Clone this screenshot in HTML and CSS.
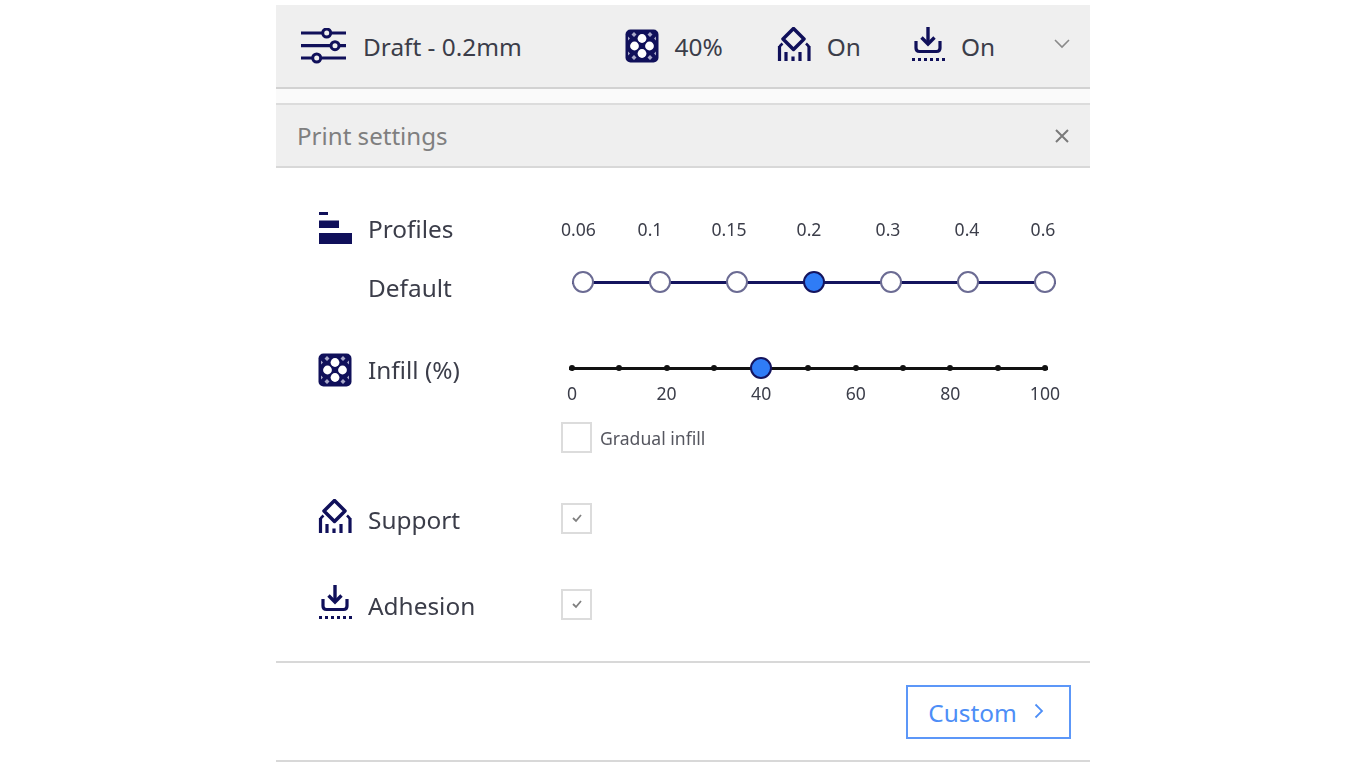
FILE: index.html

```html
<!DOCTYPE html>
<html lang="en">
<head>
<meta charset="utf-8"/>
<title>Print settings</title>
<link rel="stylesheet" href="styles.css">
</head>
<body>
<svg class="defs" width="0" height="0">
  <symbol id="i-infill" viewBox="0 0 34 34">
    <rect x="0.5" y="0.5" width="33" height="33" rx="5" fill="#10105a"/>
    <circle cx="17" cy="9.500" r="4.400" fill="#fff"/>
    <circle cx="9.500" cy="17" r="4.400" fill="#fff"/>
    <circle cx="24.500" cy="17" r="4.400" fill="#fff"/>
    <circle cx="17" cy="24.500" r="4.400" fill="#fff"/>
    <path d="M9 3l2.500 2.500L9 8 6.500 5.500zM25 3l2.500 2.500L25 8l-2.500-2.500zM9 26l2.500 2.500L9 31l-2.500-2.500zM25 26l2.500 2.500L25 31l-2.500-2.500zM3 7.500l2 2-2 2zM31 7.500l-2 2 2 2zM3 22.500l2 2-2 2zM31 22.500l-2 2 2 2z" fill="#a9a9c9"/>
  </symbol>
  <symbol id="i-support" viewBox="0 0 34 34">
    <path d="M16.500 1.500L27 12 16.500 22.500 6 12z" fill="none" stroke="#10105a" stroke-width="3.500" stroke-linejoin="round"/>
    <path d="M2.500 34V19M9 34V25M16 34V29.500M23 34V25M32 34V19" stroke="#10105a" stroke-width="3.200"/>
    <path d="M2.500 19.500l3-3M32 19.500l-3-3" stroke="#10105a" stroke-width="2.500"/>
  </symbol>
  <symbol id="i-adhesion" viewBox="0 0 34 34">
    <path d="M17 0v16" stroke="#10105a" stroke-width="3.400"/>
    <path d="M10.500 10.500L17 17l6.500-6.500" fill="none" stroke="#10105a" stroke-width="3.400"/>
    <path d="M5 14v7q0 3.500 3.500 3.500h17q3.500 0 3.500-3.500v-7" fill="none" stroke="#10105a" stroke-width="3.200"/>
    <path d="M1 32.500h33" stroke="#10105a" stroke-width="3" stroke-dasharray="3 3"/>
  </symbol>
  <symbol id="i-profiles" viewBox="0 0 34 34">
    <rect x="1" y="0" width="9" height="3" fill="#10105a"/>
    <rect x="1" y="8.500" width="20" height="7.500" fill="#10105a"/>
    <rect x="1" y="21" width="33" height="11" fill="#10105a"/>
  </symbol>
</svg>

<main class="panel">
  <header class="topbar">
    <svg class="icon-wide" viewBox="0 0 46 36">
      <path d="M0 5h21M31 5h14M0 17.700h29M39 17.700h6M0 30h11M21 30h24" stroke="#10105a" stroke-width="3.200" fill="none"/>
      <circle cx="25.700" cy="5" r="4" fill="none" stroke="#10105a" stroke-width="3"/>
      <circle cx="34" cy="17.700" r="4" fill="none" stroke="#10105a" stroke-width="3"/>
      <circle cx="15.700" cy="30" r="4" fill="none" stroke="#10105a" stroke-width="3"/>
    </svg>
    <span class="top-text">Draft - 0.2mm</span>
    <div class="top-items">
      <div class="top-item top-item-first"><svg class="icon"><use href="#i-infill"/></svg><span>40%</span></div>
      <div class="top-item"><svg class="icon"><use href="#i-support"/></svg><span>On</span></div>
      <div class="top-item"><svg class="icon"><use href="#i-adhesion"/></svg><span>On</span></div>
    </div>
    <svg class="chevron" viewBox="0 0 16 10"><path d="M1 1l7 7 7-7" fill="none" stroke="#8a8a8a" stroke-width="1.600"/></svg>
  </header>

  <div class="strip"></div>

  <div class="title-bar">
    <span>Print settings</span>
    <svg class="close" viewBox="0 0 16 16"><path d="M2 2l12 12M14 2L2 14" stroke="#7a7a7a" stroke-width="2"/></svg>
  </div>

  <section class="settings">
    <div class="row row-profiles">
      <div class="labels">
        <div class="label"><svg class="icon"><use href="#i-profiles"/></svg><span>Profiles</span></div>
        <div class="label label-plain"><span>Default</span></div>
      </div>
      <div>
        <div class="profile-values">
          <span>0.06</span><span>0.1</span><span>0.15</span><span>0.2</span><span>0.3</span><span>0.4</span><span>0.6</span>
        </div>
        <div class="profile-slider">
          <i class="stop"></i><i class="stop"></i><i class="stop"></i><i class="stop stop-on"></i><i class="stop"></i><i class="stop"></i><i class="stop"></i>
        </div>
      </div>
    </div>

    <div class="row row-infill">
      <div class="label"><svg class="icon"><use href="#i-infill"/></svg><span>Infill (%)</span></div>
      <div>
        <div class="infill-slider">
          <i class="dot"></i><i class="dot"></i><i class="dot"></i><i class="dot"></i><i class="dot"></i><i class="dot"></i><i class="dot"></i><i class="dot"></i><i class="dot"></i><i class="dot"></i><i class="dot"></i>
          <i class="thumb"></i>
        </div>
        <div class="infill-values">
          <span>0</span><span>20</span><span>40</span><span>60</span><span>80</span><span>100</span>
        </div>
        <div class="gradual"><i class="check"></i><span>Gradual infill</span></div>
      </div>
    </div>

    <div class="row row-support">
      <div class="label label-lift"><svg class="icon"><use href="#i-support"/></svg><span>Support</span></div>
      <i class="check"><svg viewBox="0 0 12 10"><path d="M2 5l3 3 5-6" fill="none" stroke="#808080" stroke-width="1.800"/></svg></i>
    </div>

    <div class="row row-adhesion">
      <div class="label label-lift"><svg class="icon"><use href="#i-adhesion"/></svg><span>Adhesion</span></div>
      <i class="check"><svg viewBox="0 0 12 10"><path d="M2 5l3 3 5-6" fill="none" stroke="#808080" stroke-width="1.800"/></svg></i>
    </div>
  </section>

  <footer class="footer">
    <button class="custom">Custom <svg viewBox="0 0 10 16"><path d="M1.500 1.500L8 8l-6.500 6.500" fill="none" stroke="#4d8ef7" stroke-width="1.800"/></svg></button>
  </footer>
</main>
</body>
</html>
```

FILE: styles.css

```css
body {
  margin: 0;
  background: #fff;
  font-family: "Noto Sans", sans-serif;
  color: #3b3d49;
}
.defs {
  position: absolute;
}
.panel {
  width: 814px;
  margin: 5px auto 0;
  filter: blur(0.6px);
}
.icon {
  width: 34px;
  height: 34px;
  flex: none;
}
.icon-wide {
  width: 46px;
  height: 36px;
  flex: none;
}

.topbar {
  height: 82px;
  display: flex;
  align-items: center;
  padding: 0 20px 0 25px;
  background: #efefef;
  border-bottom: 2px solid #d2d2d2;
  font-size: 24.4px;
}
.top-text {
  margin-left: 16px;
}
.top-items {
  display: flex;
  gap: 50px;
  margin-left: auto;
  margin-right: 59px;
}
.top-item {
  display: flex;
  align-items: center;
  gap: 16px;
}
.top-item .icon {
  margin-top: -4px;
}
.top-item-first {
  margin-right: 4px;
}
.top-item-first .icon {
  margin-top: -1px;
}
.chevron {
  width: 16px;
  height: 10px;
  margin-top: -4px;
}

.strip {
  height: 14px;
  background: #fafafa;
}
.title-bar {
  height: 61px;
  display: flex;
  align-items: center;
  justify-content: space-between;
  padding: 0 20px 0 21px;
  background: #efefef;
  border-top: 2px solid #dcdcdc;
  border-bottom: 2px solid #d8d8d8;
  font-size: 24.1px;
  color: #7f7f7f;
}
.close {
  width: 16px;
  height: 16px;
}

.settings {
  height: 495px;
  padding: 31px 0 0 42px;
  box-sizing: border-box;
  border-bottom: 2px solid #d8d8d8;
}
.row {
  display: grid;
  grid-template-columns: 243px 1fr;
}
.label {
  height: 59px;
  display: flex;
  align-items: center;
  gap: 16px;
  font-size: 24.4px;
}
.label-plain {
  padding-left: 50px;
}
.label-lift .icon {
  margin-top: -7px;
}

.profile-values {
  display: grid;
  grid-template-columns: 34px 110px 48px 112px 46px 112px 40px;
  margin-top: 20px;
  line-height: 20px;
  font-size: 17.6px;
  text-align: center;
}
.profile-slider {
  width: 484px;
  height: 22px;
  margin: 32px 0 0 11px;
  display: flex;
  justify-content: space-between;
  background: linear-gradient(#14145e, #14145e) center / 100% 3px no-repeat;
}
.stop {
  width: 18px;
  height: 18px;
  border: 2px solid #6b6b93;
  border-radius: 50%;
  background: #fff;
}
.stop-on {
  background: #2f7cf6;
  border-color: #14145e;
}

.row-infill {
  margin-top: 23px;
}
.infill-slider {
  position: relative;
  width: 479px;
  height: 6px;
  margin: 25px 0 0 8px;
  display: flex;
  justify-content: space-between;
  background: linear-gradient(#111, #111) center / 100% 3px no-repeat;
}
.dot {
  width: 6px;
  height: 6px;
  border-radius: 50%;
  background: #111;
}
.thumb {
  position: absolute;
  left: 40%;
  top: -8px;
  width: 18px;
  height: 18px;
  margin-left: -11px;
  border: 2px solid #14145e;
  border-radius: 50%;
  background: #2f7cf6;
}
.infill-values {
  width: 513px;
  margin: 10px 0 0 -9px;
  display: flex;
  justify-content: space-between;
  font-size: 17.6px;
  line-height: 24px;
}
.infill-values span {
  width: 40px;
  text-align: center;
}
.gradual {
  display: flex;
  align-items: center;
  gap: 8px;
  margin-top: 17px;
  font-size: 17.6px;
  color: #55565f;
}
.check {
  width: 27px;
  height: 27px;
  display: flex;
  align-items: center;
  justify-content: center;
  border: 2px solid #dcdcdc;
  background: #fff;
}
.check svg {
  width: 12px;
  height: 10px;
}

.row-support {
  margin-top: 37px;
  align-items: center;
}
.row-adhesion {
  margin-top: 27px;
  align-items: center;
}
.row-support .check,
.row-adhesion .check {
  margin-top: -3px;
}

.footer {
  height: 99px;
  display: flex;
  align-items: flex-start;
  justify-content: flex-end;
  padding: 22px 19px 0 0;
  box-sizing: border-box;
  border-bottom: 2px solid #d8d8d8;
}
.custom {
  width: 165px;
  height: 54px;
  padding: 0 5px 0 0;
  display: flex;
  align-items: center;
  justify-content: center;
  gap: 17px;
  border: 2px solid #5c97f8;
  background: #fff;
  color: #4d8ef7;
  font: 24.4px "Noto Sans", sans-serif;
}
.custom svg {
  width: 10px;
  height: 16px;
  margin-top: -2px;
}
```
